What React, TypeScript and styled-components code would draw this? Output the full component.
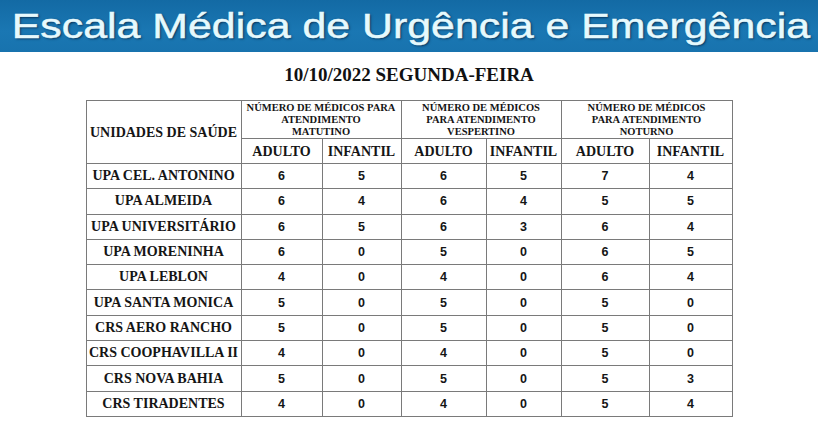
import * as React from 'react';
import styled, { createGlobalStyle } from 'styled-components';

const Global = createGlobalStyle`
  html, body {
    margin: 0;
    padding: 0;
    background: #ffffff;
  }
`;

const Page = styled.div`
  width: 818px;
  display: flex;
  flex-direction: column;
  align-items: center;
`;

const Banner = styled.header`
  width: 100%;
  height: 52px;
  background: linear-gradient(#136aa4, #1a77b3 60%, #1873ae);
  display: flex;
  align-items: center;
  justify-content: center;
  overflow: hidden;
`;

const BannerTitle = styled.h1`
  margin: 0 0 0 3px;
  font-family: 'Liberation Sans', Arial, sans-serif;
  font-weight: 400;
  font-size: 35px;
  line-height: 40px;
  color: #e6f9fd;
  white-space: nowrap;
  -webkit-text-stroke: 0.5px #e6f9fd;
  text-shadow: 1px 1px 2px rgba(0, 25, 55, 0.75);
  transform: scaleX(1.225);
`;

const DateTitle = styled.h2`
  margin: 13px 0 0;
  font-family: 'Liberation Serif', 'Times New Roman', serif;
  font-weight: 700;
  font-size: 19px;
  line-height: 20px;
  color: #111;
`;

const Table = styled.table`
  margin-top: 15px;
  border-collapse: collapse;
  table-layout: fixed;
  border: 1.5px solid #6e6e6e;
  color: #151515;
`;

const Th = styled.th<{ $small?: boolean }>`
  border: 1px solid #7a7a7a;
  padding: 0 1px;
  font-family: 'Liberation Serif', 'Times New Roman', serif;
  font-weight: 700;
  font-size: ${(p) => (p.$small ? '10.5px' : '14px')};
  line-height: ${(p) => (p.$small ? '12px' : '15px')};
  text-align: center;
  vertical-align: middle;
  white-space: nowrap;
`;

const Label = styled.td`
  border: 1px solid #7a7a7a;
  padding: 0 1px;
  font-family: 'Liberation Serif', 'Times New Roman', serif;
  font-weight: 700;
  font-size: 14px;
  text-align: center;
  white-space: nowrap;
`;

const Num = styled.td`
  border: 1px solid #7a7a7a;
  font-family: 'Liberation Sans', Arial, sans-serif;
  font-weight: 700;
  font-size: 12.5px;
  text-align: center;
`;

const Row = styled.tr<{ $h: number }>`
  height: ${(p) => p.$h}px;
`;

const widths = [155, 81, 79, 85, 75, 88, 83];

const shifts = [
  ['NÚMERO DE MÉDICOS PARA', 'ATENDIMENTO', 'MATUTINO'],
  ['NÚMERO DE MÉDICOS', 'PARA ATENDIMENTO', 'VESPERTINO'],
  ['NÚMERO DE MÉDICOS', 'PARA ATENDIMENTO', 'NOTURNO'],
];

const data: [string, number[]][] = [
  ['UPA CEL. ANTONINO', [6, 5, 6, 5, 7, 4]],
  ['UPA ALMEIDA', [6, 4, 6, 4, 5, 5]],
  ['UPA UNIVERSITÁRIO', [6, 5, 6, 3, 6, 4]],
  ['UPA MORENINHA', [6, 0, 5, 0, 6, 5]],
  ['UPA LEBLON', [4, 0, 4, 0, 6, 4]],
  ['UPA SANTA MONICA', [5, 0, 5, 0, 5, 0]],
  ['CRS AERO RANCHO', [5, 0, 5, 0, 5, 0]],
  ['CRS COOPHAVILLA II', [4, 0, 4, 0, 5, 0]],
  ['CRS NOVA BAHIA', [5, 0, 5, 0, 5, 3]],
  ['CRS TIRADENTES', [4, 0, 4, 0, 5, 4]],
];

export default function App() {
  return (
    <Page>
      <Global />
      <Banner>
        <BannerTitle>Escala Médica de Urgência e Emergência</BannerTitle>
      </Banner>
      <DateTitle>10/10/2022 SEGUNDA-FEIRA</DateTitle>
      <Table>
        <colgroup>
          {widths.map((w, i) => (
            <col key={i} style={{ width: w }} />
          ))}
        </colgroup>
        <thead>
          <Row $h={38}>
            <Th rowSpan={2}>UNIDADES DE SAÚDE</Th>
            {shifts.map((s, i) => (
              <Th key={i} colSpan={2} $small>
                {s[0]}
                <br />
                {s[1]}
                <br />
                {s[2]}
              </Th>
            ))}
          </Row>
          <Row $h={25}>
            {shifts.map((_, i) => (
              <React.Fragment key={i}>
                <Th>ADULTO</Th>
                <Th>INFANTIL</Th>
              </React.Fragment>
            ))}
          </Row>
        </thead>
        <tbody>
          {data.map(([name, vals]) => (
            <Row $h={25.3} key={name}>
              <Label>{name}</Label>
              {vals.map((v, i) => (
                <Num key={i}>{v}</Num>
              ))}
            </Row>
          ))}
        </tbody>
      </Table>
    </Page>
  );
}
